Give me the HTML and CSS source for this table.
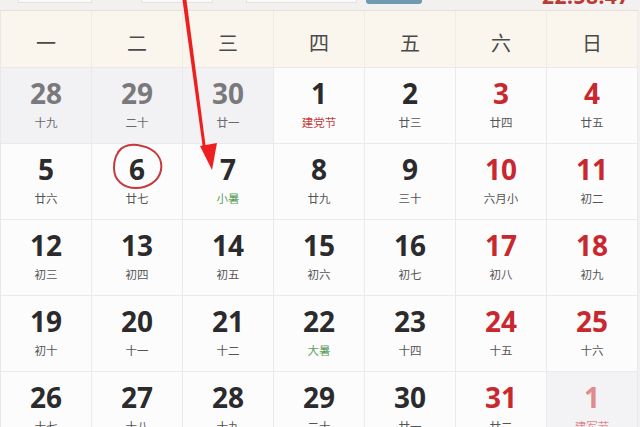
FILE: index.html
```html
<!DOCTYPE html>
<html lang="zh">
<head>
<meta charset="utf-8">
<title>日历</title>
<link rel="stylesheet" href="styles.css">
</head>
<body>
<div class="toolbar">
  <span class="tb-box tb-a"></span>
  <span class="tb-box tb-b"></span>
  <span class="tb-box tb-c"></span>
  <span class="tb-btn"></span>
  <span class="tb-time">22:58:47</span>
</div>
<div class="cal">
  <div class="wk">一</div><div class="wk">二</div><div class="wk">三</div><div class="wk">四</div><div class="wk">五</div><div class="wk">六</div><div class="wk">日</div>

  <div class="day other"><span class="num">28</span><span class="lun">十九</span></div>
  <div class="day other"><span class="num">29</span><span class="lun">二十</span></div>
  <div class="day other"><span class="num">30</span><span class="lun">廿一</span></div>
  <div class="day"><span class="num">1</span><span class="lun fest">建党节</span></div>
  <div class="day"><span class="num">2</span><span class="lun">廿三</span></div>
  <div class="day wkend"><span class="num">3</span><span class="lun">廿四</span></div>
  <div class="day wkend"><span class="num">4</span><span class="lun">廿五</span></div>

  <div class="day"><span class="num">5</span><span class="lun">廿六</span></div>
  <div class="day"><span class="num">6</span><span class="lun">廿七</span></div>
  <div class="day"><span class="num">7</span><span class="lun term">小暑</span></div>
  <div class="day"><span class="num">8</span><span class="lun">廿九</span></div>
  <div class="day"><span class="num">9</span><span class="lun">三十</span></div>
  <div class="day wkend"><span class="num">10</span><span class="lun">六月小</span></div>
  <div class="day wkend"><span class="num">11</span><span class="lun">初二</span></div>

  <div class="day"><span class="num">12</span><span class="lun">初三</span></div>
  <div class="day"><span class="num">13</span><span class="lun">初四</span></div>
  <div class="day"><span class="num">14</span><span class="lun">初五</span></div>
  <div class="day"><span class="num">15</span><span class="lun">初六</span></div>
  <div class="day"><span class="num">16</span><span class="lun">初七</span></div>
  <div class="day wkend"><span class="num">17</span><span class="lun">初八</span></div>
  <div class="day wkend"><span class="num">18</span><span class="lun">初九</span></div>

  <div class="day"><span class="num">19</span><span class="lun">初十</span></div>
  <div class="day"><span class="num">20</span><span class="lun">十一</span></div>
  <div class="day"><span class="num">21</span><span class="lun">十二</span></div>
  <div class="day"><span class="num">22</span><span class="lun term">大暑</span></div>
  <div class="day"><span class="num">23</span><span class="lun">十四</span></div>
  <div class="day wkend"><span class="num">24</span><span class="lun">十五</span></div>
  <div class="day wkend"><span class="num">25</span><span class="lun">十六</span></div>

  <div class="day"><span class="num">26</span><span class="lun">十七</span></div>
  <div class="day"><span class="num">27</span><span class="lun">十八</span></div>
  <div class="day"><span class="num">28</span><span class="lun">十九</span></div>
  <div class="day"><span class="num">29</span><span class="lun">二十</span></div>
  <div class="day"><span class="num">30</span><span class="lun">廿一</span></div>
  <div class="day wkend"><span class="num">31</span><span class="lun">廿二</span></div>
  <div class="day next"><span class="num">1</span><span class="lun">建军节</span></div>
</div>
<svg class="marks" width="640" height="427" viewBox="0 0 640 427">
  <path d="M118 152 C 124 144, 134 144, 142 146 C 156 149, 163 159, 161 170 C 159 181, 148 188, 136 188 C 123 188, 114 180, 114 168 C 114 160, 116 153, 122 148" fill="none" stroke="#c8393b" stroke-width="2" stroke-linecap="round"/>
  <polygon points="182.5,0 186.5,0 206,149 203,149" fill="#ef1f1f"/>
  <polygon points="200,146 217,143 212,170" fill="#ef1f1f"/>
</svg>
</body>
</html>
```
FILE: styles.css
```css
html, body {
  margin: 0;
  padding: 0;
}
body {
  width: 640px;
  height: 427px;
  overflow: hidden;
  background: #f3f0f0;
  font-family: "Noto Sans", "Noto Sans CJK SC", sans-serif;
  position: relative;
}
.toolbar {
  height: 10px;
  display: flex;
  align-items: flex-start;
  overflow: hidden;
}
.tb-box {
  display: block;
  height: 24px;
  margin-top: -21px;
  background: #fbf9f9;
  border: 1px solid #e6e1e1;
  box-sizing: border-box;
}
.tb-a { width: 74px; margin-left: 18px; }
.tb-b { width: 72px; margin-left: 49px; }
.tb-c { width: 111px; margin-left: 33px; }
.tb-btn {
  display: block;
  width: 56px;
  height: 24px;
  margin-top: -20px;
  margin-left: 9px;
  background: #6f9bb1;
  border-radius: 3px;
}
.tb-time {
  display: block;
  margin-left: 120px;
  margin-top: -15px;
  font-size: 21px;
  line-height: 22px;
  font-weight: 700;
  color: #b93a32;
  letter-spacing: 0.5px;
}
.cal {
  width: 638px;
  display: grid;
  grid-template-columns: repeat(7, 91px);
  border-top: 1px solid #e4dfdc;
  border-left: 1px solid #ebe7e8;
  box-sizing: border-box;
}
.wk {
  height: 56px;
  background: #faf6ee;
  border-right: 1px solid #f1ece2;
  box-sizing: border-box;
  padding-top: 20px;
  text-align: center;
  font-family: "Noto Sans CJK SC", sans-serif;
  font-size: 20px;
  line-height: 24px;
  color: #4a4a4a;
}
.day {
  height: 76px;
  box-sizing: border-box;
  border-right: 1px solid #ece9ec;
  border-top: 1px solid #ece9ec;
  background: #fdfcfd;
  display: flex;
  flex-direction: column;
  align-items: center;
  padding-top: 9px;
}
.num {
  font-size: 28px;
  line-height: 32px;
  font-weight: 700;
  color: #2b2a2c;
}
.lun {
  margin-top: 5px;
  font-family: "Noto Sans CJK SC", sans-serif;
  font-size: 11.5px;
  line-height: 16px;
  color: #555;
}
.other { background: #f2f1f4; }
.other .num { color: #7a797b; }
.other .lun { color: #6a6a6a; }
.wkend .num { color: #c9282e; }
.fest { color: #c23a36; }
.term { color: #5f9f5f; }
.next { background: #f3f2f4; }
.next .num { color: #e08a8c; }
.next .lun { color: #e08a8c; }
.marks {
  position: absolute;
  left: 0;
  top: 0;
  pointer-events: none;
}
```
